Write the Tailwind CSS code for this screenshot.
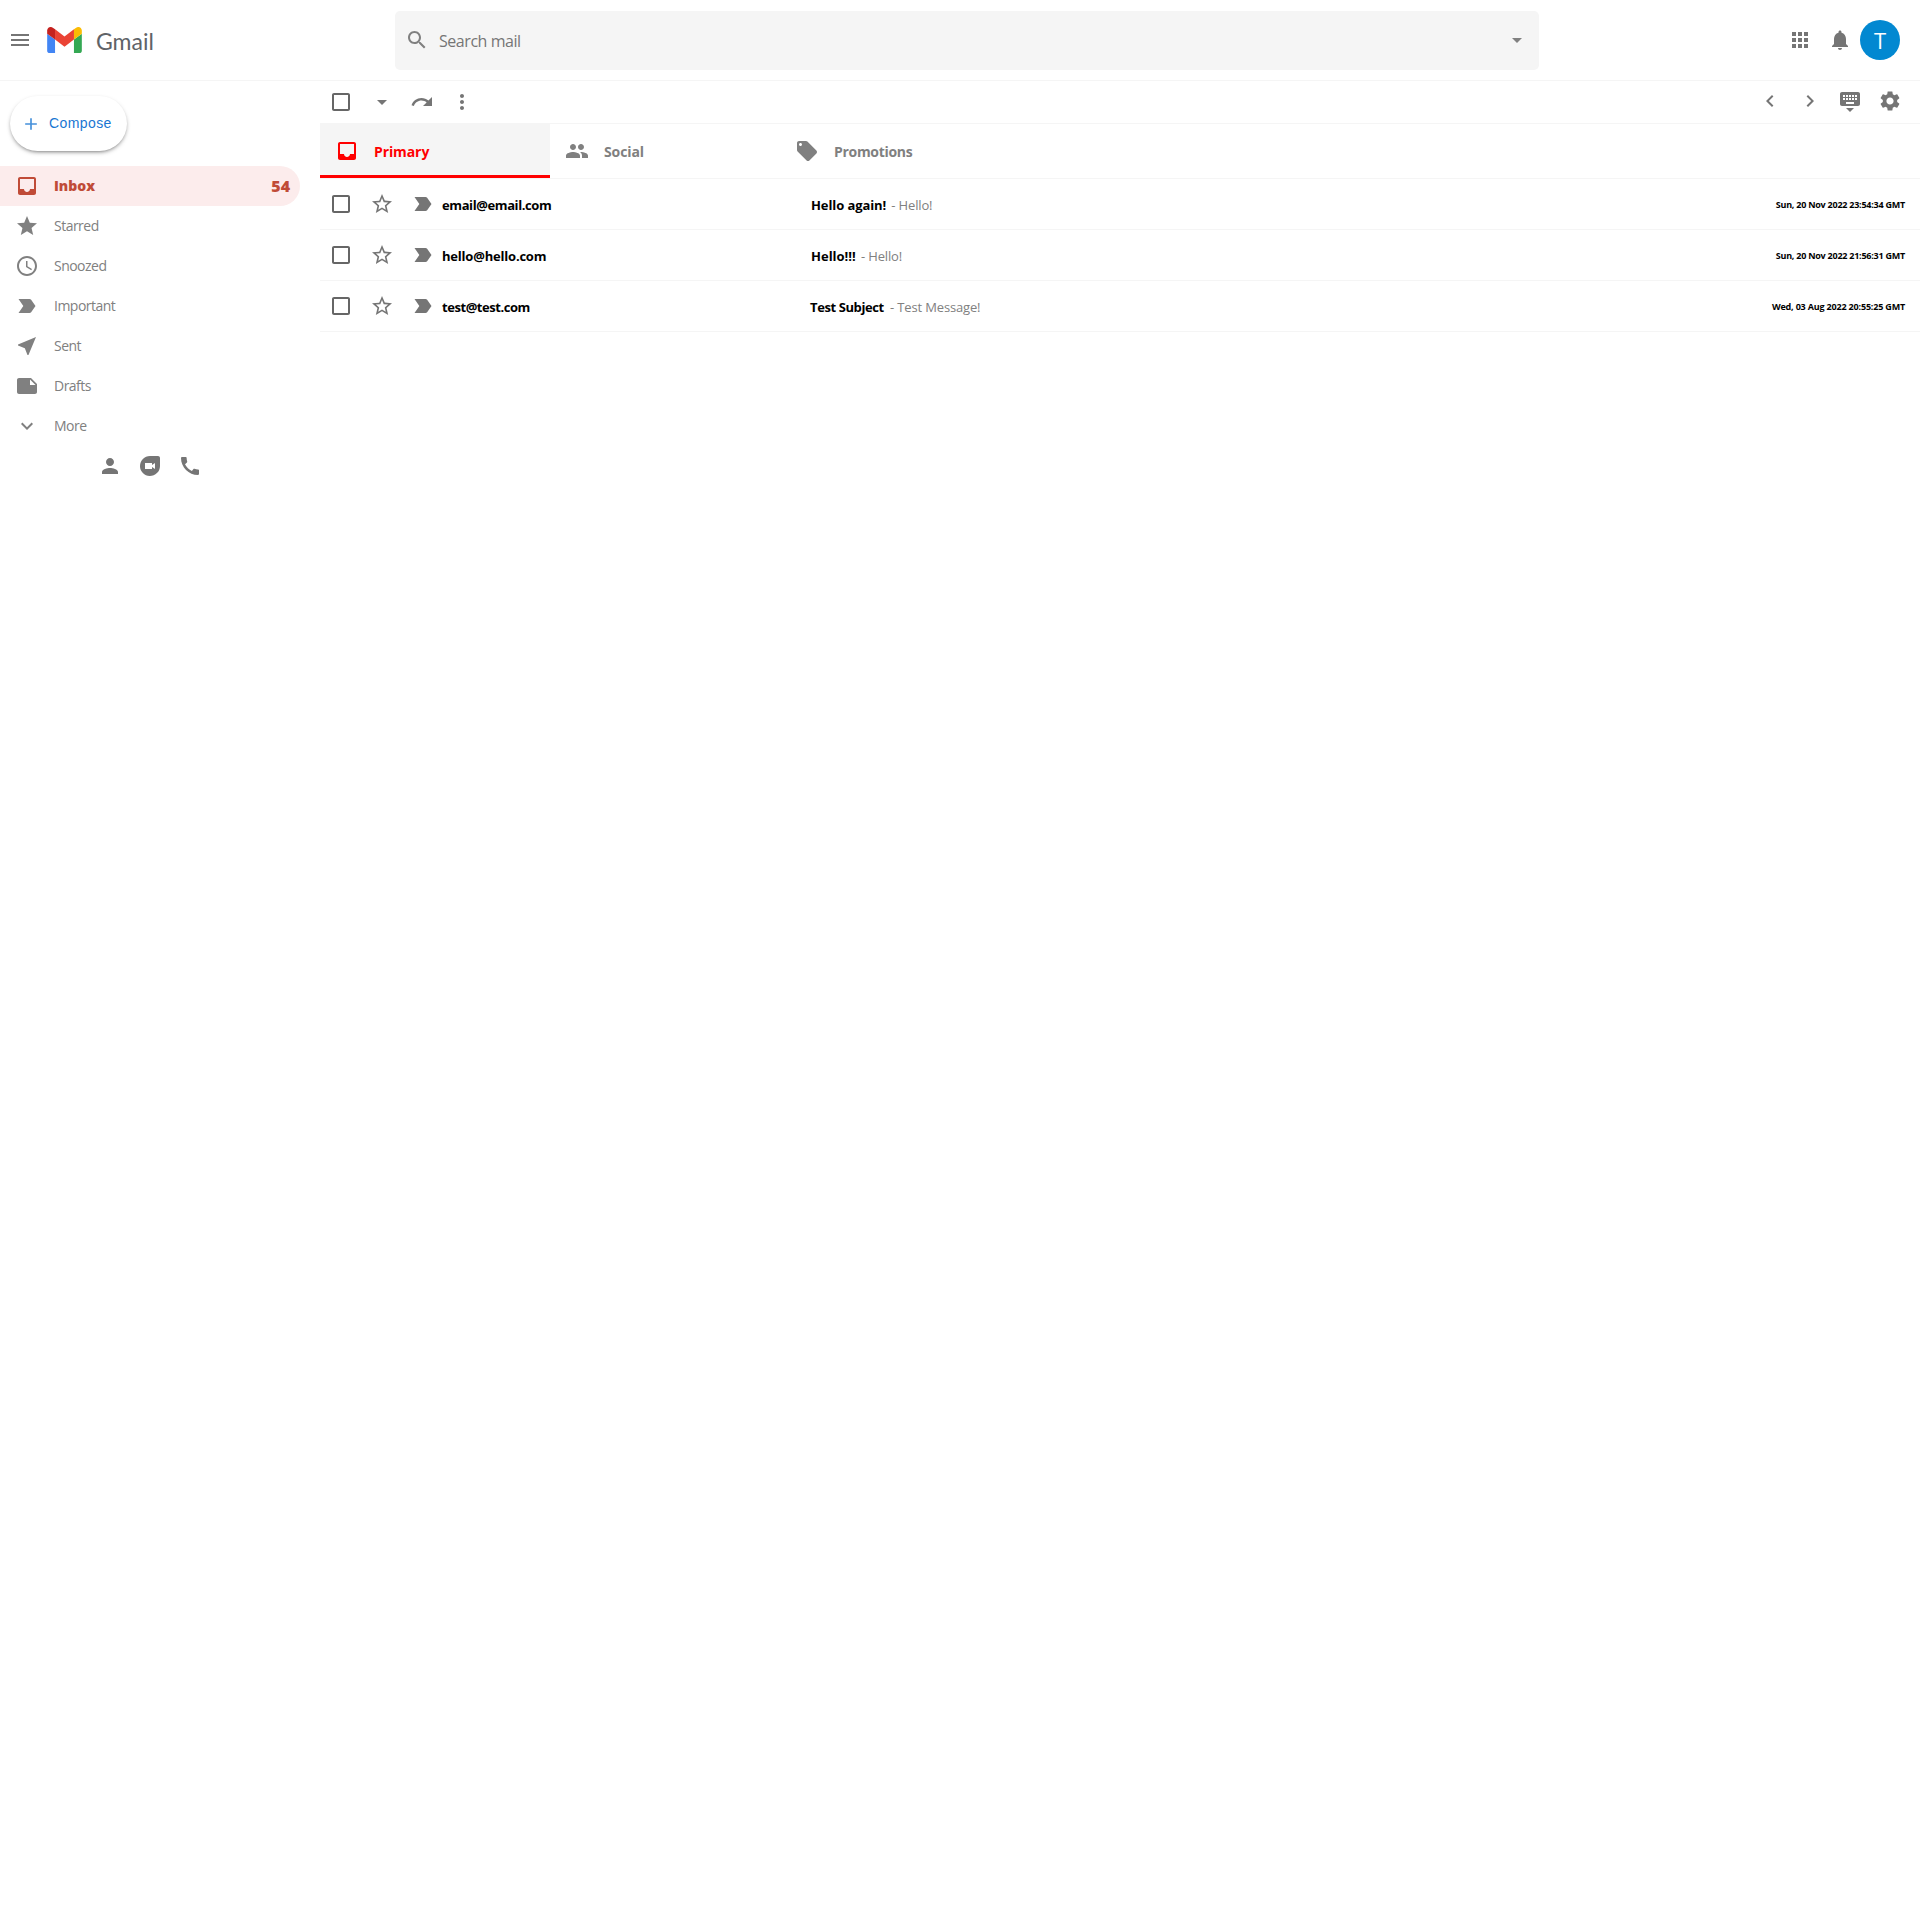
<!DOCTYPE html>
<html lang="en">
<head>
<meta charset="utf-8">
<title>Gmail</title>
<script src="https://cdn.jsdelivr.net/npm/@tailwindcss/browser@4"></script>
</head>
<body class="min-h-screen bg-white font-['Open_Sans',sans-serif] text-black">
<svg class="hidden">
  <symbol id="menu" viewBox="0 0 24 24"><path d="M3 18h18v-2H3v2zm0-5h18v-2H3v2zm0-7v2h18V6H3z"/></symbol>
  <symbol id="search" viewBox="0 0 24 24"><path d="M15.5 14h-.79l-.28-.27C15.41 12.59 16 11.11 16 9.5 16 5.91 13.09 3 9.5 3S3 5.91 3 9.5 5.91 16 9.5 16c1.61 0 3.09-.59 4.23-1.57l.27.28v.79l5 4.99L20.49 19l-4.99-5zm-6 0C7.01 14 5 11.99 5 9.5S7.01 5 9.5 5 14 7.01 14 9.5 11.99 14 9.5 14z"/></symbol>
  <symbol id="drop" viewBox="0 0 24 24"><path d="M7 10l5 5 5-5z"/></symbol>
  <symbol id="apps" viewBox="0 0 24 24"><path d="M4 8h4V4H4v4zm6 12h4v-4h-4v4zm-6 0h4v-4H4v4zm0-6h4v-4H4v4zm6 0h4v-4h-4v4zm6-10v4h4V4h-4zm-6 4h4V4h-4v4zm6 6h4v-4h-4v4zm0 6h4v-4h-4v4z"/></symbol>
  <symbol id="bell" viewBox="0 0 24 24"><path d="M12 22c1.1 0 2-.9 2-2h-4c0 1.1.89 2 2 2zm6-6v-5c0-3.07-1.64-5.64-4.5-6.32V4c0-.83-.67-1.5-1.5-1.5s-1.5.67-1.5 1.5v.68C7.63 5.36 6 7.92 6 11v5l-2 2v1h16v-1l-2-2z"/></symbol>
  <symbol id="plus" viewBox="0 0 24 24"><path d="M19 13h-6v6h-2v-6H5v-2h6V5h2v6h6v2z"/></symbol>
  <symbol id="inbox" viewBox="0 0 24 24"><path d="M19 3H4.99c-1.11 0-1.98.89-1.98 2L3 19c0 1.1.88 2 1.99 2H19c1.1 0 2-.9 2-2V5c0-1.11-.9-2-2-2zm0 12h-4c0 1.66-1.35 3-3 3s-3-1.34-3-3H4.99V5H19v10z"/></symbol>
  <symbol id="star" viewBox="0 0 24 24"><path d="M12 17.27L18.18 21l-1.64-7.03L22 9.24l-7.19-.61L12 2 9.19 8.63 2 9.24l5.46 4.73L5.82 21z"/></symbol>
  <symbol id="star-o" viewBox="0 0 24 24"><path d="M22 9.24l-7.19-.62L12 2 9.19 8.63 2 9.24l5.46 4.73L5.82 21 12 17.27 18.18 21l-1.63-7.03L22 9.24zM12 15.4l-3.76 2.27 1-4.28-3.32-2.88 4.38-.38L12 6.1l1.71 4.04 4.38.38-3.32 2.88 1 4.28L12 15.4z"/></symbol>
  <symbol id="clock" viewBox="0 0 24 24"><path d="M11.99 2C6.47 2 2 6.48 2 12s4.47 10 9.99 10C17.52 22 22 17.52 22 12S17.52 2 11.99 2zM12 20c-4.42 0-8-3.58-8-8s3.58-8 8-8 8 3.58 8 8-3.58 8-8 8zm.5-13H11v6l5.25 3.15.75-1.23-4.5-2.67z"/></symbol>
  <symbol id="important" viewBox="0 0 24 24"><path d="M3.5 18.99l11 .01c.67 0 1.27-.33 1.63-.84L20.5 12l-4.37-6.16c-.36-.51-.96-.84-1.63-.84l-11 .01L8.34 12 3.5 18.99z"/></symbol>
  <symbol id="near" viewBox="0 0 24 24"><path d="M21 3L3 10.53v.98l6.84 2.65L12.48 21h.98L21 3z"/></symbol>
  <symbol id="note" viewBox="0 0 24 24"><path d="M22 10l-6-6H4c-1.1 0-2 .9-2 2v12.01c0 1.1.9 1.99 2 1.99l16-.01c1.1 0 2-.89 2-1.99v-8zm-7-4.5l5.5 5.5H15V5.5z"/></symbol>
  <symbol id="more" viewBox="0 0 24 24"><path d="M16.59 8.59L12 13.17 7.41 8.59 6 10l6 6 6-6z"/></symbol>
  <symbol id="person" viewBox="0 0 24 24"><path d="M12 12c2.21 0 4-1.79 4-4s-1.79-4-4-4-4 1.79-4 4 1.79 4 4 4zm0 2c-2.67 0-8 1.34-8 4v2h16v-2c0-2.66-5.33-4-8-4z"/></symbol>
  <symbol id="duo" viewBox="0 0 24 24"><path d="M12 2C6.38 2 2 6.66 2 12.28 2 17.5 6.49 22 11.72 22 17.39 22 22 17.62 22 12V4c0-1.1-.9-2-2-2h-8zm5 13l-3-2v2H7V9h7v2l3-2v6z"/></symbol>
  <symbol id="phone" viewBox="0 0 24 24"><path d="M20.01 15.38c-1.23 0-2.42-.2-3.53-.56-.35-.12-.74-.03-1.01.24l-1.57 1.97c-2.83-1.35-5.48-3.9-6.89-6.83l1.95-1.66c.27-.28.35-.67.24-1.02-.37-1.11-.56-2.3-.56-3.53 0-.54-.45-.99-.99-.99H4.19C3.65 3 3 3.24 3 3.99 3 13.28 10.73 21 20.01 21c.71 0 .99-.63.99-1.18v-3.45c0-.54-.45-.99-.99-.99z"/></symbol>
  <symbol id="check" viewBox="0 0 24 24"><path d="M19 5v14H5V5h14m0-2H5c-1.1 0-2 .9-2 2v14c0 1.1.9 2 2 2h14c1.1 0 2-.9 2-2V5c0-1.1-.9-2-2-2z"/></symbol>
  <symbol id="redo" viewBox="0 0 24 24"><path d="M18.4 10.6C16.55 8.99 14.15 8 11.5 8c-4.65 0-8.58 3.03-9.96 7.22L3.9 16c1.05-3.19 4.05-5.5 7.6-5.5 1.95 0 3.73.72 5.12 1.88L13 16h9V7l-3.6 3.6z"/></symbol>
  <symbol id="dots" viewBox="0 0 24 24"><path d="M12 8c1.1 0 2-.9 2-2s-.9-2-2-2-2 .9-2 2 .9 2 2 2zm0 2c-1.1 0-2 .9-2 2s.9 2 2 2 2-.9 2-2-.9-2-2-2zm0 6c-1.1 0-2 .9-2 2s.9 2 2 2 2-.9 2-2-.9-2-2-2z"/></symbol>
  <symbol id="left" viewBox="0 0 24 24"><path d="M15.41 7.41L14 6l-6 6 6 6 1.41-1.41L10.83 12z"/></symbol>
  <symbol id="right" viewBox="0 0 24 24"><path d="M10 6L8.59 7.41 13.17 12l-4.58 4.59L10 18l6-6z"/></symbol>
  <symbol id="keyboard" viewBox="0 0 24 24"><path d="M20 3H4c-1.1 0-1.99.9-1.99 2L2 15c0 1.1.9 2 2 2h16c1.1 0 2-.9 2-2V5c0-1.1-.9-2-2-2zm-9 3h2v2h-2V6zm0 3h2v2h-2V9zM8 6h2v2H8V6zm0 3h2v2H8V9zm-1 2H5V9h2v2zm0-3H5V6h2v2zm9 7H8v-2h8v2zm0-4h-2V9h2v2zm0-3h-2V6h2v2zm3 3h-2V9h2v2zm0-3h-2V6h2v2zm-7 15l4-4H8l4 4z"/></symbol>
  <symbol id="settings" viewBox="0 0 24 24"><path d="M19.14 12.94c.04-.3.06-.61.06-.94 0-.32-.02-.64-.07-.94l2.03-1.58c.18-.14.23-.41.12-.61l-1.92-3.32c-.12-.22-.37-.29-.59-.22l-2.39.96c-.5-.38-1.03-.7-1.62-.94l-.36-2.54c-.04-.24-.24-.41-.48-.41h-3.84c-.24 0-.43.17-.47.41l-.36 2.54c-.59.24-1.13.57-1.62.94l-2.39-.96c-.22-.08-.47 0-.59.22L2.74 8.87c-.12.21-.08.47.12.61l2.03 1.58c-.05.3-.09.63-.09.94s.02.64.07.94l-2.03 1.58c-.18.14-.23.41-.12.61l1.92 3.32c.12.22.37.29.59.22l2.39-.96c.5.38 1.03.7 1.62.94l.36 2.54c.05.24.24.41.48.41h3.84c.24 0 .44-.17.47-.41l.36-2.54c.59-.24 1.13-.56 1.62-.94l2.39.96c.22.08.47 0 .59-.22l1.92-3.32c.12-.22.07-.47-.12-.61l-2.01-1.58zM12 15.6c-1.98 0-3.6-1.62-3.6-3.6s1.62-3.6 3.6-3.6 3.6 1.62 3.6 3.6-1.62 3.6-3.6 3.6z"/></symbol>
  <symbol id="people" viewBox="0 0 24 24"><path d="M16 11c1.66 0 2.99-1.34 2.99-3S17.66 5 16 5c-1.66 0-3 1.34-3 3s1.34 3 3 3zm-8 0c1.66 0 2.99-1.34 2.99-3S9.66 5 8 5C6.34 5 5 6.34 5 8s1.34 3 3 3zm0 2c-2.33 0-7 1.17-7 3.5V19h14v-2.5c0-2.33-4.67-3.5-7-3.5zm8 0c-.29 0-.62.02-.97.05 1.16.84 1.97 1.97 1.97 3.45V19h6v-2.5c0-2.33-4.67-3.5-7-3.5z"/></symbol>
  <symbol id="offer" viewBox="0 0 24 24"><path d="M21.41 11.58l-9-9C12.05 2.22 11.55 2 11 2H4c-1.1 0-2 .9-2 2v7c0 .55.22 1.05.59 1.42l9 9c.36.36.86.58 1.41.58.55 0 1.05-.22 1.41-.59l7-7c.37-.36.59-.86.59-1.41 0-.55-.23-1.06-.59-1.42zM5.5 7C4.67 7 4 6.33 4 5.5S4.67 4 5.5 4 7 4.67 7 5.5 6.33 7 5.5 7z"/></symbol>
</svg>

<header class="flex h-[81px] items-center justify-between border-b border-[#f5f5f5] pr-5 text-[#757575]">
  <div class="flex w-[395px] items-center pl-2">
    <svg class="size-6 fill-current"><use href="#menu"/></svg>
    <svg class="ml-[15px] h-[26px] w-[35px]" viewBox="52 42 88 66"><path fill="#4285f4" d="M58 108h14V74L52 59v43c0 3.32 2.69 6 6 6"/><path fill="#34a853" d="M120 108h14c3.32 0 6-2.69 6-6V59l-20 15"/><path fill="#fbbc04" d="M120 48v26l20-15v-8c0-7.42-8.47-11.65-14.4-7.2"/><path fill="#ea4335" d="M72 74V48l24 18 24-18v26L96 92"/><path fill="#c5221f" d="M52 51v8l20 15V48l-5.6-4.2c-5.94-4.45-14.4-.22-14.4 7.2"/></svg>
    <span class="ml-3.5 pt-0.5 font-['Lato',sans-serif] text-[23px] leading-7 text-[#5f6368]">Gmail</span>
  </div>
  <div class="flex h-[59px] w-[1144px] items-center rounded-[5px] bg-[#f5f5f5] pl-2.5 pr-2.5 text-[#808080]">
    <svg class="size-6 fill-current"><use href="#search"/></svg>
    <span class="ml-2.5 grow pt-0.5 text-base leading-6 tracking-[-0.45px] text-[#757575]">Search mail</span>
    <svg class="size-6 fill-current"><use href="#drop"/></svg>
  </div>
  <div class="flex w-[361px] items-center justify-end">
    <svg class="size-6 fill-current"><use href="#apps"/></svg>
    <svg class="ml-4 size-6 fill-current"><use href="#bell"/></svg>
    <div class="ml-2 flex size-10 items-center justify-center rounded-full bg-[#0288d1] text-[22px] leading-none text-white">T</div>
  </div>
</header>

<div class="flex">
  <aside class="w-80 shrink-0 pt-[15px] text-sm tracking-[-0.52px] text-[#808080]">
    <button class="mb-[15px] ml-2.5 flex h-[55px] w-[117px] items-center rounded-[30px] bg-white pl-[11px] font-['Liberation_Sans',sans-serif] text-sm tracking-[0.4px] text-[#1976d2] shadow-[0px_2px_5px_-2px_rgba(0,0,0,0.75)]">
      <svg class="size-5 fill-current opacity-80"><use href="#plus"/></svg><span class="ml-2 pb-0.5">Compose</span>
    </button>
    <nav>
      <div class="flex h-10 w-[300px] items-center rounded-r-[20px] bg-[#fcecec] pl-[15px] pr-2.5 font-extrabold text-[#c04b37]">
        <svg class="size-6 fill-current"><use href="#inbox"/></svg><span class="ml-[15px] grow tracking-normal">Inbox</span><span class="text-base tracking-normal">54</span>
      </div>
      <div class="flex h-10 items-center gap-[15px] pl-[15px]"><svg class="size-6 fill-current"><use href="#star"/></svg><span>Starred</span></div>
      <div class="flex h-10 items-center gap-[15px] pl-[15px]"><svg class="size-6 fill-current"><use href="#clock"/></svg><span>Snoozed</span></div>
      <div class="flex h-10 items-center gap-[15px] pl-[15px]"><svg class="size-6 fill-current"><use href="#important"/></svg><span>Important</span></div>
      <div class="flex h-10 items-center gap-[15px] pl-[15px]"><svg class="size-6 fill-current"><use href="#near"/></svg><span>Sent</span></div>
      <div class="flex h-10 items-center gap-[15px] pl-[15px]"><svg class="size-6 fill-current"><use href="#note"/></svg><span>Drafts</span></div>
      <div class="flex h-10 items-center gap-[15px] pl-[15px]"><svg class="size-6 fill-current"><use href="#more"/></svg><span>More</span></div>
    </nav>
    <div class="flex h-10 w-[300px] items-center justify-center gap-4 text-[#757575]">
      <svg class="size-6 fill-current"><use href="#person"/></svg>
      <svg class="size-6 fill-current"><use href="#duo"/></svg>
      <svg class="size-6 fill-current"><use href="#phone"/></svg>
    </div>
  </aside>

  <main class="grow">
    <div class="flex h-[43px] items-center justify-between border-b border-[#f5f5f5] pl-[9px] pr-[18px] text-[#757575]">
      <div class="flex items-center">
        <svg class="size-6 fill-[#666]"><use href="#check"/></svg>
        <svg class="ml-[17px] size-6 fill-current"><use href="#drop"/></svg>
        <svg class="ml-4 size-6 fill-current"><use href="#redo"/></svg>
        <svg class="ml-4 size-6 fill-current"><use href="#dots"/></svg>
      </div>
      <div class="flex items-center gap-4 pb-0.5">
        <svg class="size-6 fill-current"><use href="#left"/></svg>
        <svg class="size-6 fill-current"><use href="#right"/></svg>
        <svg class="size-6 fill-current"><use href="#keyboard"/></svg>
        <svg class="size-6 fill-current"><use href="#settings"/></svg>
      </div>
    </div>
    <div class="flex h-[55px] border-b border-[#f5f5f5] text-sm font-bold text-[#808080]">
      <div class="flex w-[230px] items-center border-b-[3px] border-[#ff0000] bg-[#f5f5f5] pl-[15px] pt-[3px] text-[#ff0000]"><svg class="size-6 fill-current"><use href="#inbox"/></svg><span class="ml-[15px] pt-0.5 tracking-[-0.1px]">Primary</span></div>
      <div class="flex w-[230px] items-center border-b-[3px] border-transparent pl-[15px] pt-[3px]"><svg class="size-6 fill-current"><use href="#people"/></svg><span class="ml-[15px] pt-0.5 tracking-[-0.1px]">Social</span></div>
      <div class="flex w-[230px] items-center border-b-[3px] border-transparent pl-[15px] pt-[3px]"><svg class="size-6 fill-current"><use href="#offer"/></svg><span class="ml-[15px] pt-0.5 tracking-[-0.3px]">Promotions</span></div>
    </div>
    <div class="text-[13px] font-bold">
      <div class="flex h-[51px] items-center border-b border-[#f5f5f5] pl-[9px] pr-[15px]">
        <svg class="size-6 fill-[#666]"><use href="#check"/></svg><svg class="ml-[17px] size-6 fill-[#757575]"><use href="#star-o"/></svg><svg class="ml-[17px] size-6 fill-[#757575]"><use href="#important"/></svg>
        <span class="ml-[7px] w-[368px] pt-[3px] tracking-[-0.4px]">email@email.com</span>
        <span class="grow pl-px pt-[3px] tracking-[-0.1px]">Hello again!<span class="ml-0.5 font-normal tracking-[-0.15px] text-[#808080]"> - Hello!</span></span>
        <span class="pt-0.5 text-[9px] tracking-[-0.24px]">Sun, 20 Nov 2022 23:54:34 GMT</span>
      </div>
      <div class="flex h-[51px] items-center border-b border-[#f5f5f5] pl-[9px] pr-[15px]">
        <svg class="size-6 fill-[#666]"><use href="#check"/></svg><svg class="ml-[17px] size-6 fill-[#757575]"><use href="#star-o"/></svg><svg class="ml-[17px] size-6 fill-[#757575]"><use href="#important"/></svg>
        <span class="ml-[7px] w-[368px] pt-[3px] tracking-[-0.2px]">hello@hello.com</span>
        <span class="grow pl-px pt-[3px] tracking-[0px]">Hello!!!<span class="ml-0.5 font-normal tracking-[-0.15px] text-[#808080]"> - Hello!</span></span>
        <span class="pt-0.5 text-[9px] tracking-[-0.24px]">Sun, 20 Nov 2022 21:56:31 GMT</span>
      </div>
      <div class="flex h-[51px] items-center border-b border-[#f5f5f5] pl-[9px] pr-[15px]">
        <svg class="size-6 fill-[#666]"><use href="#check"/></svg><svg class="ml-[17px] size-6 fill-[#757575]"><use href="#star-o"/></svg><svg class="ml-[17px] size-6 fill-[#757575]"><use href="#important"/></svg>
        <span class="ml-[7px] w-[368px] pt-[3px] tracking-[-0.45px]">test@test.com</span>
        <span class="grow pt-[3px] tracking-[-0.4px]">Test Subject<span class="ml-[3px] font-normal tracking-[-0.15px] text-[#808080]"> - Test Message!</span></span>
        <span class="pt-0.5 text-[9px] tracking-[-0.18px]">Wed, 03 Aug 2022 20:55:25 GMT</span>
      </div>
    </div>
  </main>
</div>
</body>
</html>
